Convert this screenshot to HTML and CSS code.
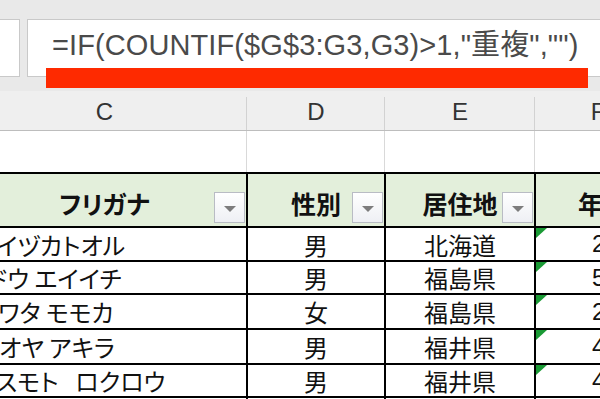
FILE: index.html
```html
<!DOCTYPE html>
<html lang="ja">
<head>
<meta charset="utf-8">
<link rel="stylesheet" href="styles.css">
</head>
<body>
<div class="app">
  <div class="topbar"></div>
  <div class="formula-row">
    <div class="namebox"></div>
    <div class="fx">=IF(COUNTIF($G$3:G3,G3)&gt;1,"重複","")</div>
  </div>
  <div class="spacer"></div>
  <div class="cols colheads">
    <div class="ch">C</div>
    <div class="ch">D</div>
    <div class="ch">E</div>
    <div class="ch">F</div>
  </div>
  <div class="cols blank">
    <div class="bc"></div>
    <div class="bc"></div>
    <div class="bc"></div>
    <div class="bc"></div>
  </div>
  <div class="cols list">
    <div class="hd">フリガナ<span class="filter"></span></div>
    <div class="hd">性別<span class="filter"></span></div>
    <div class="hd">居住地<span class="filter"></span></div>
    <div class="hd age">年齢</div>

    <div class="td name n1">イイヅカトオル</div>
    <div class="td mid">男</div>
    <div class="td mid">北海道</div>
    <div class="td num">25</div>

    <div class="td name n2">エンドウ エイイチ</div>
    <div class="td mid">男</div>
    <div class="td mid">福島県</div>
    <div class="td num">53</div>

    <div class="td name n3">イワタ モモカ</div>
    <div class="td mid">女</div>
    <div class="td mid">福島県</div>
    <div class="td num">22</div>

    <div class="td name n4">オオヤ アキラ</div>
    <div class="td mid">男</div>
    <div class="td mid">福井県</div>
    <div class="td num">41</div>

    <div class="td name n5">ヤスモト&ensp;&thinsp;ロクロウ</div>
    <div class="td mid">男</div>
    <div class="td mid">福井県</div>
    <div class="td num">47</div>

    <div class="td"></div>
    <div class="td"></div>
    <div class="td"></div>
    <div class="td"></div>
  </div>
  <div class="redbar"></div>
</div>
</body>
</html>
```

FILE: styles.css
```css
html, body {
  margin: 0;
  padding: 0;
}
body {
  width: 600px;
  height: 399px;
  overflow: hidden;
  background: #e9e9e9;
}
.app {
  position: relative;
  width: 600px;
  height: 399px;
  overflow: hidden;
  background: #e9e9e9;
  font-family: "Noto Sans CJK JP", sans-serif;
}
.topbar {
  height: 19px;
}
.formula-row {
  display: flex;
  gap: 7px;
  height: 58px;
}
.namebox {
  margin-left: -30px;
  width: 48px;
  background: #fff;
  border: 1px solid #c9c9c9;
}
.fx {
  flex: 1;
  margin-right: -30px;
  background: #fff;
  border: 1px solid #c9c9c9;
  box-sizing: border-box;
  padding-left: 24px;
  font-family: "Liberation Sans", "Noto Sans CJK JP", sans-serif;
  font-size: 29px;
  letter-spacing: 0.1px;
  line-height: 50px;
  color: #4a4a4a;
  white-space: nowrap;
}
.spacer {
  height: 14px;
}
.cols {
  display: grid;
  grid-template-columns: 283px 136px 148px 124px;
  column-gap: 2px;
  margin-left: -37px;
  width: 697px;
}
.colheads {
  height: 39px;
  background: #efefef;
  border-bottom: 1px solid #bdbdbd;
}
.ch {
  margin-top: 6px;
  margin-right: -1px;
  border-right: 1px solid #d2d2d2;
  display: flex;
  align-items: center;
  justify-content: center;
  padding-bottom: 4px;
  font-family: "Liberation Sans", sans-serif;
  font-size: 24px;
  color: #333;
}
.blank {
  height: 41px;
  background: #fff;
}
.bc {
  margin-right: -1px;
  border-right: 1px solid #d9d9d9;
}
.list {
  background: #000;
  padding-top: 2px;
  row-gap: 2px;
  grid-auto-rows: 52px 32px 31px 33px 33px 31px 30px;
}
.hd {
  position: relative;
  background: #e3efdb;
  display: flex;
  align-items: center;
  justify-content: center;
  padding-top: 6px;
  font-size: 25px;
  font-weight: 700;
  color: #111;
  font-feature-settings: "palt";
  white-space: nowrap;
}
.age {
  padding-left: 10px;
}
.filter {
  position: absolute;
  right: 1px;
  bottom: 3px;
  width: 31px;
  height: 31px;
  box-sizing: border-box;
  border: 1px solid #b9bcc4;
  background: linear-gradient(#ffffff, #eef0f4);
}
.filter::after {
  content: "";
  position: absolute;
  left: 9px;
  top: 13px;
  border-left: 6px solid transparent;
  border-right: 6px solid transparent;
  border-top: 6px solid #7d7d7d;
}
.td {
  position: relative;
  background: #fff;
  display: flex;
  align-items: center;
  font-size: 24px;
  color: #111;
  white-space: nowrap;
  overflow: hidden;
}
.name {
  font-feature-settings: "palt";
}
.n1 { padding-left: 12px; }
.n2 { text-indent: -19px; }
.n3 { padding-left: 14px; }
.n4 { padding-left: 14px; }
.n5 { padding-left: 10px; }
.mid {
  justify-content: center;
}
.num {
  justify-content: flex-start;
  padding-left: 56px;
  font-family: "Liberation Sans", sans-serif;
}
.num::before {
  content: "";
  position: absolute;
  left: 0;
  top: 0;
  border-top: 10px solid #1a9a35;
  border-right: 11px solid transparent;
}
.redbar {
  position: absolute;
  left: 46px;
  top: 68px;
  width: 542px;
  height: 20px;
  background: #fe2a00;
}
```
